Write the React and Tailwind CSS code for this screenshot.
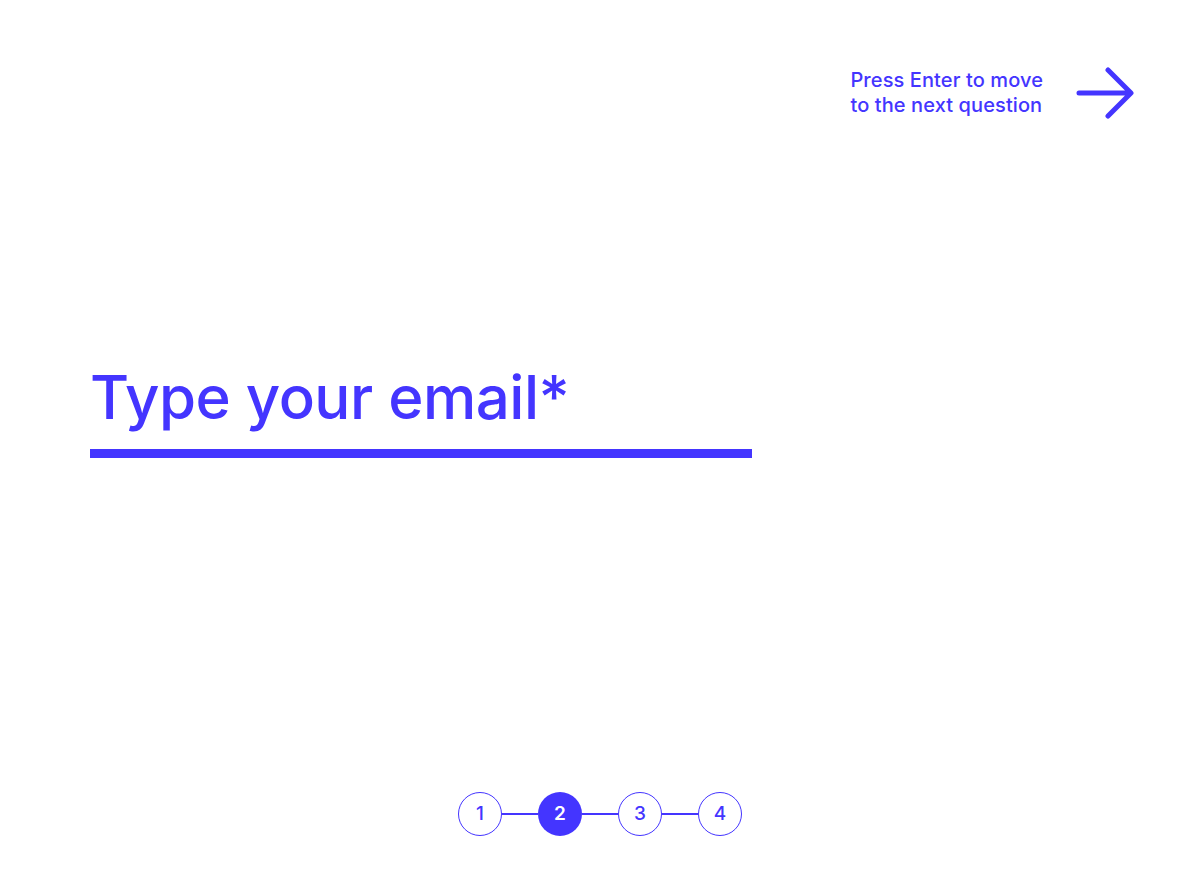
export default function App() {
  const steps = [1, 2, 3, 4];
  return (
    <div
      className="w-[1200px] h-[880px] bg-white flex flex-col text-[#4435ff]"
      style={{ fontFamily: "Inter, 'Noto Sans', sans-serif" }}
    >
      <div className="flex justify-end items-center pt-[67px] pr-[66px] gap-[33px]">
        <div className="text-[20px] leading-[25px] font-medium tracking-[0.1px]">
          <div>Press Enter to move</div>
          <div>to the next question</div>
        </div>
        <svg width="58" height="52" viewBox="0 0 58 52" fill="none">
          <path d="M3 26 H54 M32 3 L55 26 L32 49" stroke="#4435ff" strokeWidth="5" strokeLinecap="round" strokeLinejoin="round" />
        </svg>
      </div>
      <div className="pl-[90px] pt-[248px]">
        <div className="text-[60px] leading-[60px] font-medium tracking-[-0.5px]">Type your email*</div>
        <div className="mt-[22px] w-[662px] h-[9px] bg-[#4435ff]" />
      </div>
      <div className="flex-1" />
      <div className="flex justify-center items-center pb-[44px]">
        {steps.map((n, i) => (
          <div key={n} className="flex items-center">
            {i > 0 && <div className="w-[36px] h-[1.5px] bg-[#4435ff]" />}
            <div
              className={
                n === 2
                  ? "w-[44px] h-[44px] rounded-full bg-[#4435ff] text-white flex items-center justify-center text-[19px] font-semibold"
                  : "w-[44px] h-[44px] rounded-full border-[1.5px] border-[#4435ff] flex items-center justify-center text-[19px] font-medium"
              }
            >
              {n}
            </div>
          </div>
        ))}
      </div>
    </div>
  );
}
